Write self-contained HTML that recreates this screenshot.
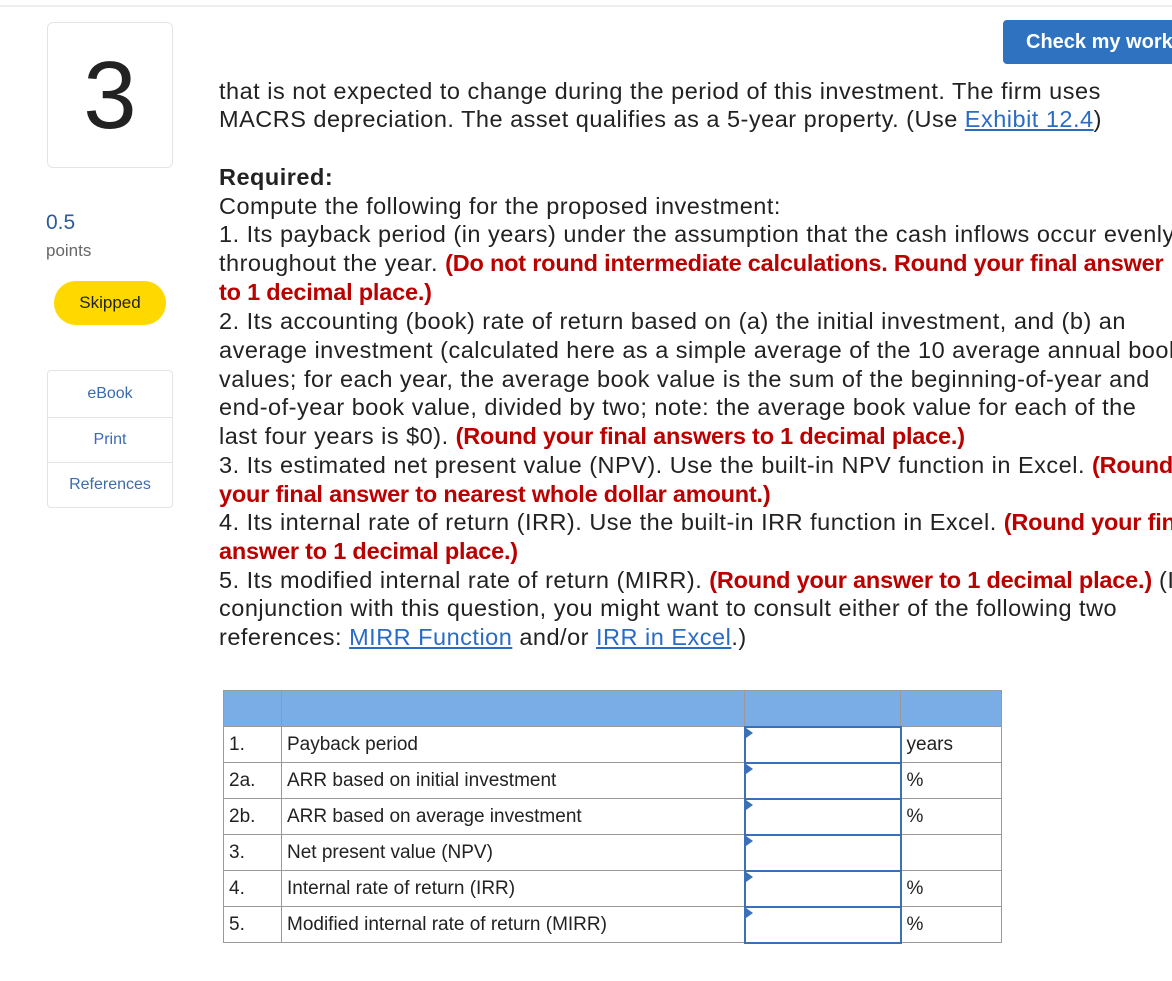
<!DOCTYPE html>
<html><head><style>
body{margin:0;width:1172px;height:981px;background:#fff;position:relative;overflow:hidden;font-family:"Liberation Sans",sans-serif;}
.a{position:absolute;white-space:nowrap}
.t{position:absolute;left:219px;font-size:23.5px;letter-spacing:0.5px;color:#222;white-space:nowrap;line-height:28px}
.r{color:#b00;font-weight:bold;letter-spacing:-0.2px}
.l{color:#2a6bc4;text-decoration:underline}
table{position:absolute;left:223px;top:690px;border-collapse:collapse;font-size:19px;color:#222}
td{border:1px solid #999;height:36px;padding:0 5px;box-sizing:border-box}
.h td{background:#7aade5;border-color:#999;height:36px}
.inp{border:2px solid #3a70b8;padding:0;position:relative}
.inp:before{content:"";position:absolute;left:0;top:0;border-left:7px solid #3a70b8;border-top:5px solid transparent;border-bottom:5px solid transparent}
</style></head><body>
<div class="a" style="left:0;top:5px;width:1172px;height:2px;background:#eee"></div>
<div class="a" style="left:1003px;top:20px;width:190px;height:44px;background:#2f72c0;border-radius:4px;color:#fff;font-weight:bold;font-size:20px;line-height:44px;padding-left:23px;box-sizing:border-box">Check my work</div>
<div class="a" style="left:47px;top:22px;width:126px;height:146px;border:1px solid #e4e4e4;border-radius:6px;box-sizing:border-box;text-align:center;font-size:96px;line-height:146px;color:#222">3</div>
<div class="a" style="left:46px;top:211px;font-size:21px;color:#2a5c9a">0.5</div>
<div class="a" style="left:46px;top:241px;font-size:17px;color:#666">points</div>
<div class="a" style="left:54px;top:281px;width:112px;height:44px;background:#ffd800;border-radius:22px;text-align:center;line-height:44px;font-size:17px;color:#222">Skipped</div>
<div class="a" style="left:47px;top:370px;width:126px;height:138px;border:1px solid #e4e4e4;border-radius:4px;box-sizing:border-box;font-size:16px;color:#3b6bb0;text-align:center">
<div style="height:46px;line-height:46px;border-bottom:1px solid #e4e4e4">eBook</div>
<div style="height:44px;line-height:44px;border-bottom:1px solid #e4e4e4">Print</div>
<div style="line-height:44px">References</div></div>

<div class="t" style="top:77px">that is not expected to change during the period of this investment. The firm uses</div>
<div class="t" style="top:105px">MACRS depreciation. The asset qualifies as a 5-year property. (Use <span class="l">Exhibit 12.4</span>)</div>
<div class="t" style="top:163px;font-weight:bold">Required:</div>
<div class="t" style="top:192px">Compute the following for the proposed investment:</div>
<div class="t" style="top:220px">1. Its payback period (in years) under the assumption that the cash inflows occur evenly</div>
<div class="t" style="top:249px">throughout the year. <span class="r">(Do not round intermediate calculations. Round your final answer</span></div>
<div class="t" style="top:278px"><span class="r">to 1 decimal place.)</span></div>
<div class="t" style="top:307px">2. Its accounting (book) rate of return based on (a) the initial investment, and (b) an</div>
<div class="t" style="top:336px">average investment (calculated here as a simple average of the 10 average annual book</div>
<div class="t" style="top:365px">values; for each year, the average book value is the sum of the beginning-of-year and</div>
<div class="t" style="top:393px">end-of-year book value, divided by two; note: the average book value for each of the</div>
<div class="t" style="top:422px">last four years is $0). <span class="r">(Round your final answers to 1 decimal place.)</span></div>
<div class="t" style="top:451px">3. Its estimated net present value (NPV). Use the built-in NPV function in Excel. <span class="r">(Round</span></div>
<div class="t" style="top:480px"><span class="r">your final answer to nearest whole dollar amount.)</span></div>
<div class="t" style="top:508px">4. Its internal rate of return (IRR). Use the built-in IRR function in Excel. <span class="r">(Round your final</span></div>
<div class="t" style="top:537px"><span class="r">answer to 1 decimal place.)</span></div>
<div class="t" style="top:566px">5. Its modified internal rate of return (MIRR). <span class="r">(Round your answer to 1 decimal place.)</span> (In</div>
<div class="t" style="top:594px">conjunction with this question, you might want to consult either of the following two</div>
<div class="t" style="top:623px">references: <span class="l">MIRR Function</span> and/or <span class="l">IRR in Excel</span>.)</div>

<table>
<tr class="h"><td style="width:58px"></td><td style="width:463px"></td><td style="width:156px"></td><td style="width:101px"></td></tr>
<tr><td>1.</td><td>Payback period</td><td class="inp"></td><td>years</td></tr>
<tr><td>2a.</td><td>ARR based on initial investment</td><td class="inp"></td><td>%</td></tr>
<tr><td>2b.</td><td>ARR based on average investment</td><td class="inp"></td><td>%</td></tr>
<tr><td>3.</td><td>Net present value (NPV)</td><td class="inp"></td><td></td></tr>
<tr><td>4.</td><td>Internal rate of return (IRR)</td><td class="inp"></td><td>%</td></tr>
<tr><td>5.</td><td>Modified internal rate of return (MIRR)</td><td class="inp"></td><td>%</td></tr>
</table>
</body></html>
